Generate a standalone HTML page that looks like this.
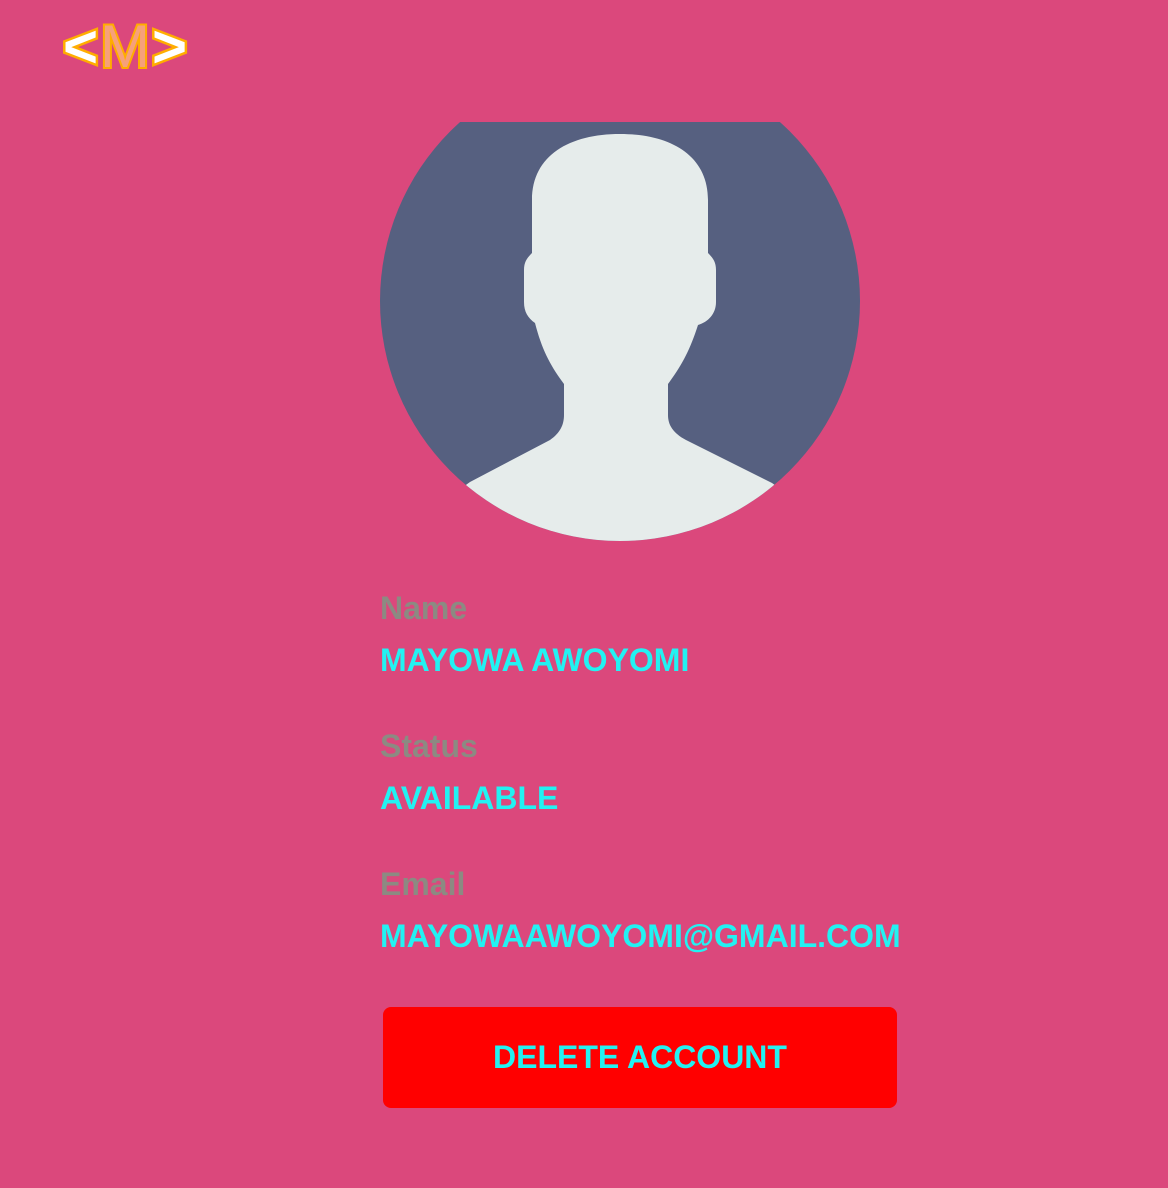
<!DOCTYPE html>
<html><head><meta charset="utf-8"><style>
html,body{margin:0;padding:0}
body{width:1168px;height:1188px;background:#db487c;position:relative;overflow:hidden;font-family:"Liberation Sans",Arial,sans-serif;}
.logo{position:absolute;left:63px;top:14px;font-size:60px;font-weight:bold;color:#fff;-webkit-text-stroke:5px #ffad00;paint-order:stroke fill;line-height:66px;letter-spacing:2px}
.logo .m{font-weight:normal;color:#f7a07a;-webkit-text-stroke:4px #ffad00}
.av{position:absolute;left:380px;top:122px}
.lbl{position:absolute;left:380px;font-size:32px;font-weight:bold;color:#8c8a82;line-height:34px}
.val{position:absolute;left:380px;font-size:32px;font-weight:bold;color:#22f2f2;line-height:34px}
.btn{position:absolute;left:383px;top:1007px;width:514px;height:101px;background:#ff0000;border-radius:8px;color:#22f2f2;font-weight:bold;font-size:32px;text-align:center;line-height:101px}
</style></head><body>
<div class="logo">&lt;<span class="m">M</span>&gt;</div>
<svg class="av" width="480" height="420" viewBox="380 122 480 420">
<defs><clipPath id="c"><circle cx="620" cy="301" r="240"/></clipPath></defs>
<circle cx="620" cy="301" r="240" fill="#566080"/>
<g clip-path="url(#c)" fill="#e6eceb">
<path d="M532 253 L532 200 C532 155 570 134 620 134 C670 134 708 155 708 200 L708 253 C713 258 716 262 716 270 L716 302 C716 314 708 322 698 325 C690 350 682 365 668 384 L668 415 C668 425 673 433 686 440 L772 483 C790 495 800 520 800 560 L440 560 C440 520 450 495 470 482 L550 440 C560 433 564 425 564 415 L564 384 C550 365 542 350 535 323 C528 318 524 312 524 302 L524 270 C524 262 527 258 532 253 Z"/>
</g>
</svg>
<div class="lbl" style="top:591px">Name</div>
<div class="val" style="top:643px">MAYOWA AWOYOMI</div>
<div class="lbl" style="top:729px">Status</div>
<div class="val" style="top:781px">AVAILABLE</div>
<div class="lbl" style="top:867px">Email</div>
<div class="val" style="top:919px">MAYOWAAWOYOMI@GMAIL.COM</div>
<div class="btn">DELETE ACCOUNT</div>
</body></html>
